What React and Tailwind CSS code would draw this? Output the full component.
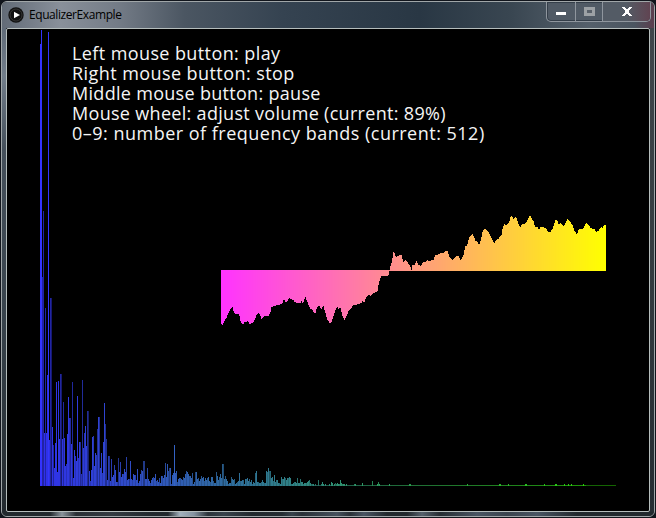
import React from "react";

// Height in pixels of each spectrum column, starting at x = 40.
const SPECTRUM = [
  442, 456, 209, 275, 53, 178, 53, 111, 454, 46,
  188, 188, 59, 41, 18, 43, 104, 14, 105, 47, 112, 112, 47, 84, 48, 20, 22, 52, 89, 68,
  68, 42, 104, 8, 36, 30, 25, 90, 28, 44, 44, 12, 106, 38, 53, 60, 40, 75, 75, 15,
  5, 16, 49, 50, 20, 33, 31, 57, 69, 69, 18, 33, 13, 44, 83, 62, 47, 6, 30, 30,
  5, 27, 9, 11, 21, 16, 4, 4, 28, 14, 24, 9, 12, 12, 17, 14, 29, 6, 7, 7,
  25, 7, 6, 12, 11, 11, 6, 17, 3, 5, 12, 16, 15, 25, 25, 7, 7, 18, 7, 5,
  3, 6, 8, 9, 8, 12, 5, 6, 4, 8, 3, 10, 10, 8, 11, 23, 9, 22, 15, 18,
  18, 2, 11, 13, 41, 13, 15, 4, 7, 8, 8, 7, 6, 9, 8, 12, 15, 14, 12, 10,
  10, 8, 13, 2, 4, 14, 14, 7, 8, 5, 7, 10, 8, 9, 5, 8, 6, 8, 9, 5,
  4, 9, 9, 5, 3, 3, 14, 10, 6, 9, 12, 8, 22, 22, 7, 10, 7, 5, 2, 3,
  3, 9, 7, 6, 7, 2, 3, 4, 5, 13, 5, 5, 6, 6, 2, 7, 7, 8, 5, 7,
  4, 6, 2, 4, 3, 13, 15, 4, 4, 3, 3, 4, 6, 4, 3, 3, 15, 14, 18, 15,
  15, 8, 9, 5, 11, 4, 6, 6, 3, 3, 2, 9, 7, 7, 9, 8, 6, 8, 8, 9,
  8, 2, 2, 3, 4, 4, 3, 8, 3, 3, 7, 4, 4, 2, 3, 3, 3, 4, 5, 6,
  3, 2, 2, 2, 1, 2, 1, 1, 6, 1, 1, 2, 4, 2, 1, 2, 1, 1, 1, 2,
  1, 4, 3, 1, 2, 3, 2, 3, 2, 2, 6, 3, 2, 2, 2, 1, 2, 1, 1, 1,
  1, 1, 1, 1, 2, 2, 1, 1, 1, 1, 1, 1, 3, 1, 1, 1, 1, 1, 1, 1,
  1, 1, 5, 1, 1, 1, 1, 2, 4, 2, 1, 1, 1, 1, 1, 1, 1, 1, 1, 2,
];

// Quiet high bands that still rise to two pixels.
const HIGH_PEAKS = new Set([409, 410, 467, 499, 500, 508, 525, 526, 544, 555, 556, 564, 568, 571, 583]);
const DIM = new Set([42, 43, 45, 50, 51, 53, 60, 61, 63, 70, 72, 80, 82, 87, 88, 97, 99, 105, 106, 109, 118, 129, 143, 144, 169, 195, 223, 269, 285, 311, 335]);
const DARKER = new Set([51, 61, 88]);

const columns = [];
for (let x = 40; x < 616; x++) {
  const t = (x - 40) / 576;
  const h = SPECTRUM[x - 40] ?? (HIGH_PEAKS.has(x) ? 2 : 1);
  let o = 0.92;
  if (x < 42 || x === 48 || x === 174) o = 1;
  else if (DIM.has(x)) o = DARKER.has(x) ? 0.45 : 0.65;
  else if (HIGH_PEAKS.has(x)) o = 0.85;
  else if (h <= 1) o = x > 585 ? 0.4 : 0.6;
  else if (x > 62 && x % 3 === 0) o = 0.78;
  columns.push({ x, h, fill: `rgb(51,${Math.round(51 + 204 * t)},${Math.round(255 * (1 - t))})`, o });
}

// Sampled waveform: x and y of each knot, in thirds of a pixel from an origin.
const toPoints = (ox, oy, list) => {
  const out = [];
  for (let i = 0; i < list.length; i += 2) out.push([ox + list[i] / 3, oy + list[i + 1] / 3]);
  return out;
};
const KNOTS = [
  ...toPoints(215, 260, [18,192,22,195,30,180,36,170,42,155,48,145,53,141,57,158,62,162,72,162,78,188,85,192,90,185,100,184,104,192,110,190,118,182,125,165,131,157,136,168,140,178,148,168,160,168,166,158,170,140,180,138,185,134,195,134,204,128,207,114,211,126,217,126,222,111,228,117,235,120,240,127,256,129,259,122,263,129,267,125,270,108,276,122,280,135,287,147,293,150,297,158,302,158,306,141,314,138,319,147,325,136,331,158,337,180,345,190,348,190,353,175,361,152,367,139,371,147,376,141,383,170,389,180,394,170,400,155,410,142,414,134,420,137,428,132,438,130,444,122,447,130,453,112,461,103,466,108,474,99,487,95,492,66,498,48,514,49,520,46]),
  ...toPoints(380, 205, [29,195,33,178,37,165,39,142,43,143,46,152,50,155,55,152,60,151,66,151,69,172,75,165,82,170,88,180,93,190,94,202,97,181,103,180,110,168,114,178,122,183,130,172,138,170,142,166,148,168,160,165,166,150,175,149,182,142,190,145,196,139,203,139,207,154,213,160,217,166,222,162,230,153,236,153,241,166,250,154,256,124,262,120,267,97,273,92,278,88,283,98,287,111,291,106,297,120,303,103,309,75,315,69,321,76,328,84]),
  ...toPoints(490, 205, [0,90,5,100,13,117,17,105,24,103,31,93,35,88,39,64,44,56,49,62,55,55,60,45,62,34,68,35,71,42,76,36,80,38,82,48,90,68,96,58,103,58,108,52,114,42,118,34,123,34,126,44,131,50,135,66,142,66,148,74,150,66,168,68,173,78,181,83,189,68,196,46,202,46,206,60,212,54,220,64,228,52,233,40,238,47,247,60,254,78,261,90,266,72,277,72,285,62,289,52,295,60,303,70,315,72,318,82,326,77,333,66,338,68,343,60,348,60]),
];

const wave = [];
for (let x = 221; x < 606; x++) {
  let i = 0;
  while (i < KNOTS.length - 2 && KNOTS[i + 1][0] < x + 0.5) i++;
  const [x0, y0] = KNOTS[i];
  const [x1, y1] = KNOTS[i + 1];
  const f = Math.max(0, Math.min(1, (x + 0.5 - x0) / (x1 - x0)));
  const y = Math.round(y0 + (y1 - y0) * f);
  const top = Math.min(y, 270);
  const t = (x - 221) / 384;
  wave.push({ x, y: top, h: Math.max(y, 271) - top, fill: `rgb(255,${Math.round(51 + 204 * t)},${Math.round(255 * (1 - t))})` });
}

const LINES = [
  { text: "Left mouse button: play", cls: "tracking-[0.4px]" },
  { text: "Right mouse button: stop", cls: "tracking-[0.43px]" },
  { text: "Middle mouse button: pause", cls: "tracking-[0.3px]" },
  { text: "Mouse wheel: adjust volume (current: 89%)", cls: "tracking-[0.31px]" },
  { text: "0–9: number of frequency bands (current: 512)", cls: "tracking-[0.49px]" },
];

function WindowButtons() {
  return (
    <div className="flex h-[20px] w-[105px] rounded-b-[5px] border border-t-0 border-[#8f969e] bg-[#505a65] shadow-[inset_0_0_0_1px_#343e49]">
      <div className="flex w-[29px] items-center justify-center border-r border-[#8f969e]">
        <div className="mt-[3px] h-[3px] w-[10px] bg-white" />
      </div>
      <div className="flex w-[27px] items-center justify-center border-r border-[#8f969e]">
        <div className="h-[9px] w-[11px] border-[3px] border-[#9ca1a5] bg-[#59616a]" />
      </div>
      <div className="flex flex-1 items-center justify-center rounded-br-[4px] bg-linear-to-r from-[#535b65] from-50% to-[#604452]">
        <svg width="10" height="9" viewBox="0 0 10 9" shapeRendering="crispEdges">
          <path d="M0 0h3l2 2.5L7 0h3L6.7 4.5 10 9H7L5 6.5 3 9H0l3.3-4.5z" fill="#fff" />
        </svg>
      </div>
    </div>
  );
}

export default function App() {
  return (
    <div className="h-[518px] w-[656px] overflow-hidden bg-[#11151c] pl-px pt-px">
      <div className="flex h-[516px] w-[654px] flex-col overflow-hidden rounded-[6px] border border-[#a0a6a8] bg-[#22292e]">
        <header className="flex h-[26px] shrink-0 items-start justify-between bg-[linear-gradient(90deg,#626b77_0%,#89909a_9%,#737b86_18%,#4b5662_28%,#354351_43%,#293744_64%,#394651_78%,#55606b_90%,#4b5560_97%,#5b3e4e_100%)]">
          <div className="flex h-[26px] items-center pl-[6px]">
            <svg width="16" height="16" viewBox="0 0 16 16">
              <circle cx="8" cy="8" r="7.7" fill="#111" />
              <circle cx="8" cy="8" r="6" fill="none" stroke="#353535" strokeWidth="1" />
              <path d="M6 4.7l6 3.3-6 3.3z" fill="#fff" />
            </svg>
            <span className="ml-[5px] whitespace-nowrap font-['Open_Sans',sans-serif] text-[12px] leading-[16px] tracking-[-0.42px] text-black">EqualizerExample</span>
          </div>
          <div className="pr-[3px]">
            <WindowButtons />
          </div>
        </header>
        <div className="flex h-[484px] shrink-0">
          <div className="w-[4px] shrink-0 bg-[linear-gradient(180deg,#606b78_0%,#717d8a_10%,#45505b_25%,#38434c_60%,#22292e_100%)]" />
          <main className="relative h-[484px] w-[644px] shrink-0 rounded-[2px] border border-[#b5bdbc] bg-black">
            <svg className="absolute left-0 top-0" width="642" height="482" viewBox="7 29 642 482" shapeRendering="crispEdges">
              {columns.map((c) => (
                <rect key={c.x} x={c.x} y={486 - c.h} width="1" height={c.h} fill={c.fill} opacity={c.o} />
              ))}
              {wave.map((c) => (
                <rect key={c.x} x={c.x} y={c.y} width="1" height={c.h} fill={c.fill} />
              ))}
            </svg>
            <div className="relative pl-[65px] pt-[14px] font-['Open_Sans',sans-serif] text-[18px] leading-[20px] text-[#f5f5f5]">
              {LINES.map((l) => (
                <div key={l.text} className={`${l.cls} whitespace-nowrap`}>{l.text}</div>
              ))}
            </div>
          </main>
          <div className="flex-1 bg-[linear-gradient(180deg,#3f464b_0%,#343b40_50%,#252c32_100%)]" />
        </div>
        <footer className="flex-1 bg-[linear-gradient(90deg,#22292e_0px,#22292e_48px,#8a949c_60px,#2a3036_74px,#343b42_110px,#22292e_150px,#22292e_166px,#a3b1bd_178px,#8593a0_192px,#2c343b_206px,#39434c_222px,#22292e_250px,#252d33_280px,#38434c_290px,#2a3138_300px,#46515d_335px,#2a3138_348px,#4a5563_362px,#22292e_385px,#22292e_405px,#56616c_420px,#262d33_438px,#4a5563_475px,#3a444e_505px,#4a5563_535px,#22292e_575px,#22292e_100%)]" />
      </div>
    </div>
  );
}
